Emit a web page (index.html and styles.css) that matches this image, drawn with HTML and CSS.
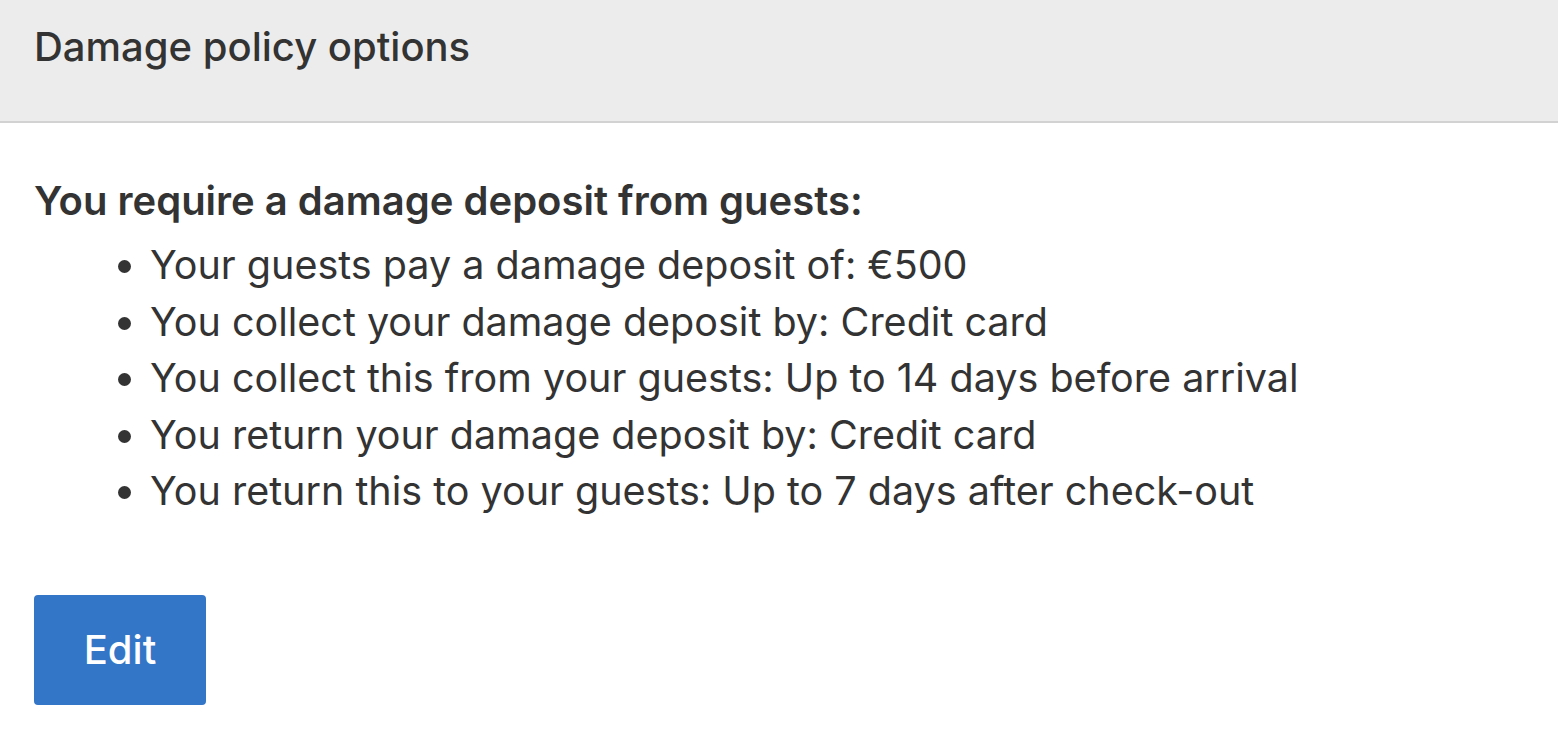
FILE: index.html
```html
<!DOCTYPE html>
<html>
<head>
<meta charset="utf-8">
<link rel="stylesheet" href="styles.css">
</head>
<body>
<div class="panel">
  <div class="panel-header">
    <h2 class="panel-title">Damage policy options</h2>
  </div>
  <div class="panel-body">
    <p class="lead">You require a damage deposit from guests:</p>
    <ul class="details">
      <li>Your guests pay a damage deposit of: €500</li>
      <li>You collect your damage deposit by: Credit card</li>
      <li>You collect this from your guests: Up to 14 days before arrival</li>
      <li>You return your damage deposit by: Credit card</li>
      <li>You return this to your guests: Up to 7 days after check-out</li>
    </ul>
    <button class="btn-edit">Edit</button>
  </div>
</div>
</body>
</html>
```
FILE: styles.css
```css
html, body {
  margin: 0;
  padding: 0;
  background: #ffffff;
}
body {
  font-family: Inter, "Noto Sans", "Liberation Sans", sans-serif;
  color: #333333;
}
.panel-header {
  background: #ececec;
  border-bottom: 2px solid #d2d2d2;
  height: 121px;
  padding: 0 34px;
  display: flex;
  align-items: flex-start;
}
.panel-title {
  margin: 23px 0 0 0;
  font-size: 40px;
  font-weight: 500;
  line-height: 48px;
  color: #333333;
}
.panel-body {
  padding: 50px 34px 0 34px;
}
.lead {
  margin: 0;
  font-size: 40px;
  font-weight: 600;
  line-height: 56px;
}
.details {
  margin: 8px 0 0 0;
  padding-left: 116px;
  font-size: 39.5px;
  line-height: 56.5px;
}
.btn-edit {
  display: block;
  margin-top: 75px;
  width: 172px;
  height: 110px;
  background: #3375c7;
  color: #ffffff;
  border: none;
  border-radius: 4px;
  font-family: Inter, "Noto Sans", "Liberation Sans", sans-serif;
  font-size: 40px;
  font-weight: 500;
}
```
